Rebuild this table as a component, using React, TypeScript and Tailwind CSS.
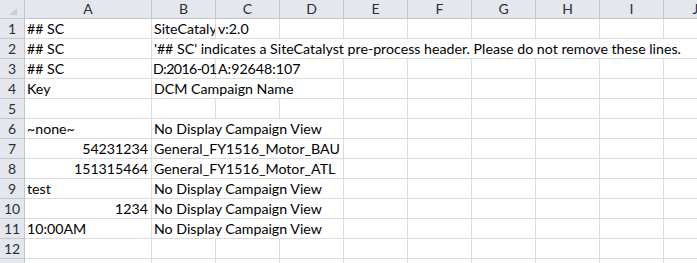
import React from "react";

type Cell = { text?: string; span?: number; right?: boolean; clip?: boolean; tight?: boolean };

const columns = ["A", "B", "C", "D", "E", "F", "G", "H", "I", "J"];

// Each row lists its cells left to right; a span lets long text run over the empty neighbours
const rows: Cell[][] = [
  [{ text: "## SC" }, { text: "SiteCataly", clip: true }, { text: "v:2.0" }],
  [{ text: "## SC" }, { text: "'## SC' indicates a SiteCatalyst pre-process header. Please do not remove these lines.", span: 9 }],
  [{ text: "## SC" }, { text: "D:2016-01", tight: true }, { text: "A:92648:107", span: 2 }],
  [{ text: "Key" }, { text: "DCM Campaign Name", span: 3 }],
  [],
  [{ text: "~none~" }, { text: "No Display Campaign View", span: 3 }],
  [{ text: "54231234", right: true }, { text: "General_FY1516_Motor_BAU", span: 3 }],
  [{ text: "151315464", right: true }, { text: "General_FY1516_Motor_ATL", span: 3 }],
  [{ text: "test" }, { text: "No Display Campaign View", span: 3 }],
  [{ text: "1234", right: true }, { text: "No Display Campaign View", span: 3 }],
  [{ text: "10:00AM" }, { text: "No Display Campaign View", span: 3 }],
  [],
  [],
];

const spanClass: Record<number, string> = {
  1: "col-span-1",
  2: "col-span-2",
  3: "col-span-3",
  9: "col-span-9",
};

function fillRow(cells: Cell[]): Cell[] {
  const out = [...cells];
  let used = out.reduce((n, c) => n + (c.span ?? 1), 0);
  while (used < columns.length) {
    out.push({});
    used++;
  }
  return out;
}

const App: React.FC = () => {
  return (
    <div className="w-[697px] h-[263px] overflow-hidden bg-white font-['Lato','Liberation_Sans',sans-serif] text-[14.2px] text-black">
      <div className="grid grid-cols-[25px_127px_repeat(9,64px)] auto-rows-[20px] grid-rows-[19px]">
        {/* corner */}
        <div className="relative bg-[#e4e8ed] border-r border-b border-[#c0c6cd]">
          <svg className="absolute right-[7px] bottom-[3px]" width="8" height="7" viewBox="0 0 8 7">
            <polygon points="8,0 8,7 0,7" fill="#c9ced5" />
          </svg>
        </div>
        {columns.map((c) => (
          <div
            key={c}
            className="flex items-center justify-center bg-[#e4e8ed] border-r border-b border-[#c0c6cd] text-[14px] text-[#27313c] leading-none"
          >
            {c}
          </div>
        ))}

        {rows.map((r, i) => (
          <React.Fragment key={i}>
            <div className="flex items-center justify-center bg-[#e4e8ed] border-r border-b border-[#c0c6cd] text-[14px] text-[#27313c] leading-none">
              {i < 12 ? i + 1 : ""}
            </div>
            {fillRow(r).map((cell, j) => (
              <div
                key={j}
                className={`${spanClass[cell.span ?? 1]} border-r border-b border-[#dadcdd] leading-[19px] whitespace-nowrap ${
                  cell.right ? "text-right pr-[3px]" : cell.tight ? "pl-[1px] tracking-[-0.6px]" : "pl-[2px]"
                } ${cell.clip ? "overflow-hidden" : ""}`}
              >
                {cell.text}
              </div>
            ))}
          </React.Fragment>
        ))}
      </div>
    </div>
  );
};

export default App;
